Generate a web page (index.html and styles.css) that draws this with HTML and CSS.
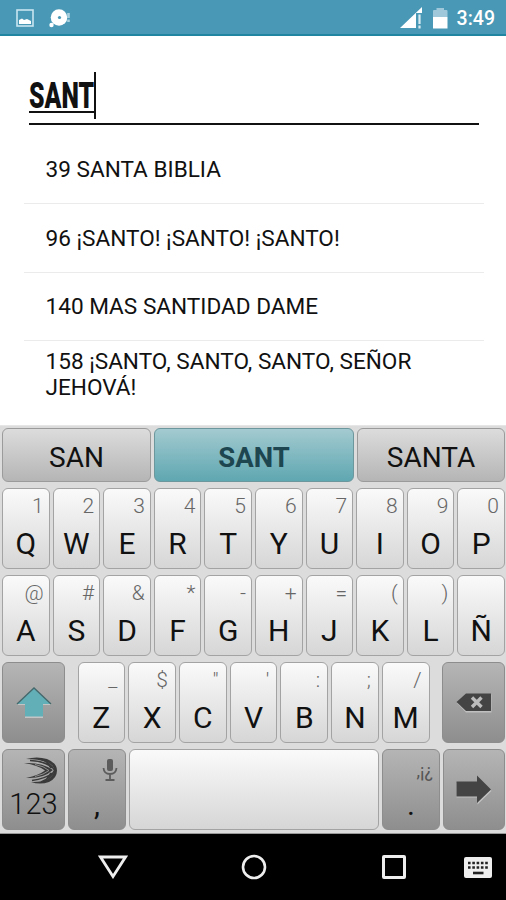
FILE: index.html
```
<!DOCTYPE html>
<html lang="es">
<head>
    <meta charset="UTF-8">
    <meta name="viewport" content="width=device-width, initial-scale=1.0">
    <title>Himnario</title>
    <link rel="stylesheet" href="styles.css">
</head>
<body>
    <div class="status-bar">
        <svg class="icon-picture" width="18" height="18" viewBox="0 0 18 18">
            <rect x="1" y="1" width="16" height="16" fill="none" stroke="#c9e5f0" stroke-width="1.6"/>
            <path d="M3 15V11L6 9.500L8 11L11 10L15 12V15Z" fill="#fff"/>
        </svg>
        <svg class="icon-disc" width="22" height="20" viewBox="0 0 22 20">
            <circle cx="10" cy="8.500" r="8.300" fill="#fff"/>
            <circle cx="2.500" cy="16" r="2.200" fill="#fff"/>
            <circle cx="10.500" cy="8.500" r="1.600" fill="#4998b6"/>
            <path d="M19.500 4V9M19.500 10.500V13" stroke="#a8d0de" stroke-width="2.600"/>
        </svg>
        <span class="spacer"></span>
        <svg class="icon-signal" width="22" height="22" viewBox="0 0 22 22">
            <path d="M0 21L22 0V6H16V21Z" fill="#fff"/>
            <path d="M19.500 7.500V17M19.500 18.500V21.500" stroke="#d8ebf2" stroke-width="2.200"/>
        </svg>
        <svg class="icon-battery" width="15" height="21" viewBox="0 0 15 21">
            <path d="M0 9V3Q0 2 1 2H3.500V0H11V2H13.500Q14.500 2 14.500 3V9Z" fill="#9fc9da"/>
            <path d="M0 9H14.500V20.500H0Z" fill="#fff"/>
        </svg>
        <span class="clock">3:49</span>
    </div>

    <div class="content">
        <div class="search-box">
            <div class="search-text"><span>SANT</span></div>
            <div class="cursor"></div>
        </div>
        <ul class="result-list">
            <li>39 SANTA BIBLIA</li>
            <li>96 ¡SANTO! ¡SANTO! ¡SANTO!</li>
            <li>140 MAS SANTIDAD DAME</li>
            <li class="two-lines">158 ¡SANTO, SANTO, SANTO, SEÑOR JEHOVÁ!</li>
        </ul>
    </div>

    <div class="keyboard">
        <div class="suggestions">
            <div class="suggestion">SAN</div>
            <div class="suggestion active">SANT</div>
            <div class="suggestion">SANTA</div>
        </div>
        <div class="key-row">
            <div class="key"><small>1</small><b>Q</b></div>
            <div class="key"><small>2</small><b>W</b></div>
            <div class="key"><small>3</small><b>E</b></div>
            <div class="key"><small>4</small><b>R</b></div>
            <div class="key"><small>5</small><b>T</b></div>
            <div class="key"><small>6</small><b>Y</b></div>
            <div class="key"><small>7</small><b>U</b></div>
            <div class="key"><small>8</small><b>I</b></div>
            <div class="key"><small>9</small><b>O</b></div>
            <div class="key"><small>0</small><b>P</b></div>
        </div>
        <div class="key-row">
            <div class="key"><small>@</small><b>A</b></div>
            <div class="key"><small>#</small><b>S</b></div>
            <div class="key"><small>&amp;</small><b>D</b></div>
            <div class="key"><small>*</small><b>F</b></div>
            <div class="key"><small>-</small><b>G</b></div>
            <div class="key"><small>+</small><b>H</b></div>
            <div class="key"><small>=</small><b>J</b></div>
            <div class="key"><small>(</small><b>K</b></div>
            <div class="key"><small>)</small><b>L</b></div>
            <div class="key"><small></small><b>Ñ</b></div>
        </div>
        <div class="key-row letters-row">
            <div class="key dark icon-key">
                <svg width="36" height="32" viewBox="0 0 36 32">
                    <path d="M1 18L18 2L35 18H27V31H9V18Z" fill="#c4c4c4"/>
                    <path d="M1 17L18 1L35 17H27V29.500H9V17Z" fill="#62afb7"/>
                    <path d="M1 17L18 1L35 17" fill="none" stroke="#45686c" stroke-width="1.300"/>
                </svg>
            </div>
            <div class="letters">
                <div class="key"><small>_</small><b>Z</b></div>
                <div class="key"><small>$</small><b>X</b></div>
                <div class="key"><small>"</small><b>C</b></div>
                <div class="key"><small>'</small><b>V</b></div>
                <div class="key"><small>:</small><b>B</b></div>
                <div class="key"><small>;</small><b>N</b></div>
                <div class="key"><small>/</small><b>M</b></div>
            </div>
            <div class="key dark icon-key">
                <svg width="36" height="20" viewBox="0 0 36 20">
                    <path d="M1 10L10 1.500H35.500V19.500H10Z" fill="#c0c0c0"/>
                    <path d="M0.500 9L10 0.500H35V18H10Z" fill="#444"/>
                    <path d="M16 4.500L25.500 14M25.500 4.500L16 14" stroke="#bdbdbd" stroke-width="3.400"/>
                </svg>
            </div>
        </div>
        <div class="key-row bottom-row">
            <div class="key dark numbers">
                <svg width="34" height="27" viewBox="0 0 34 27" fill="#3a3a3a">
                    <path d="M2 2Q13 -1 23 2Q33 6 33 13.500Q33 21 25 25Q16 28 7 25Q18 25.500 24 22Q30 18.500 30 13Q30 8 23 5Q14 2 2 2Z"/>
                    <path d="M0 6Q18 5 29 13Q19 22 2 21Q15 18 21 13.500Q14 8 0 6Z"/>
                    <path d="M6 3.500Q21 4 28.500 11M16 2Q26 5 31 14M8 23.500Q21 22 28.500 16M17 25Q26 22 31 13M22 4L27 11M22 23L27 16" fill="none" stroke="#3a3a3a" stroke-width="1.600"/>
                    <path d="M11 7.500Q20 9 25 13.500Q20 17.500 11 19.500" fill="none" stroke="#999" stroke-width="0.900"/>
                </svg>
                <b>123</b>
            </div>
            <div class="key dark comma">
                <svg width="16" height="24" viewBox="0 0 16 24" fill="none" stroke="#5c5c5c">
                    <rect x="5" y="1" width="6" height="12" rx="2" fill="#5c5c5c" stroke="none"/>
                    <path d="M1.500 10Q2 16 8 16Q14 16 14.500 10M8 16V21.500M3.500 22H12.500" stroke-width="1.800"/>
                </svg>
                <b>,</b>
            </div>
            <div class="key space"></div>
            <div class="key dark period"><small>,¡¿</small><b>.</b></div>
            <div class="key dark icon-key">
                <svg width="36" height="30" viewBox="0 0 36 30">
                    <path d="M0.500 8H21.500V2L35.500 16L21.500 29.500V22.500H0.500Z" fill="#c2c2c2"/>
                    <path d="M0.500 6.500H21V0.500L35 14.500L21 28V21.500H0.500Z" fill="#444"/>
                </svg>
            </div>
        </div>
    </div>

    <div class="nav-bar">
        <svg class="nav-back" width="30" height="24" viewBox="0 0 30 24">
            <path d="M2.500 2H27.500L15 21.500Z" fill="none" stroke="#eee" stroke-width="2.800"/>
        </svg>
        <svg class="nav-home" width="26" height="26" viewBox="0 0 26 26">
            <circle cx="13" cy="13" r="11" fill="none" stroke="#eee" stroke-width="2.600"/>
        </svg>
        <svg class="nav-recent" width="24" height="24" viewBox="0 0 24 24">
            <rect x="1.500" y="1.500" width="21" height="21" rx="0.500" fill="none" stroke="#eee" stroke-width="3"/>
        </svg>
        <svg class="nav-keyboard" width="28" height="21" viewBox="0 0 28 21">
            <rect width="28" height="21" rx="2" fill="#eee"/>
            <path d="M4 6H24M4 10.500H24" stroke="#222" stroke-width="2.600" stroke-dasharray="2.600 1.700"/>
            <path d="M9 16H19.500" stroke="#222" stroke-width="2.600"/>
        </svg>
    </div>
</body>
</html>
```
FILE: styles.css
```
* {
    box-sizing: border-box;
}

body {
    font-family: Roboto, "Liberation Sans", sans-serif;
    background-color: #fff;
    color: #111;
    margin: 0;
    height: 900px;
    display: flex;
    flex-direction: column;
    overflow: hidden;
}

svg {
    display: block;
    flex: none;
}

/* Status bar */
.status-bar {
    height: 36px;
    flex: none;
    display: flex;
    align-items: flex-start;
    padding: 0 11px 0 16px;
    background-color: #4998b6;
    border-bottom: 2px solid #1f85a0;
}

.icon-picture {
    margin-top: 9px;
}

.icon-disc {
    margin: 9px 0 0 15px;
}

.spacer {
    flex: 1;
}

.icon-signal {
    margin: 7px 11px 0 0;
}

.icon-battery {
    margin: 8px 9px 0 0;
}

.clock {
    color: #fff;
    font-size: 19.5px;
    font-weight: 500;
    line-height: 24px;
    margin-top: 7px;
}

/* Search and results */
.content {
    height: 389px;
    flex: none;
    padding: 36px 22px 0 24px;
}

.search-box {
    display: flex;
    height: 53px;
    margin: 0 5px;
    border-bottom: 2px solid #111;
}

.search-text {
    width: 65px;
    height: 41px;
    border-bottom: 2px solid #111;
}

.search-text span {
    display: block;
    width: 100px;
    font-size: 37px;
    font-weight: 900;
    line-height: 47px;
    transform: scaleX(0.67);
    transform-origin: left;
}

.cursor {
    width: 2px;
    height: 47px;
    background-color: #111;
}

.result-list {
    list-style: none;
    margin: 11px 0 0;
    padding: 0;
}

.result-list li {
    height: 68.3px;
    display: flex;
    align-items: center;
    padding: 2px 22px 0 21.5px;
    font-size: 22.6px;
    line-height: 26.5px;
    border-bottom: 1px solid #ebebeb;
}

.result-list .two-lines {
    padding-top: 0;
    border-bottom: none;
}

/* Keyboard */
.keyboard {
    height: 409px;
    flex: none;
    padding: 2px 1px 0 2px;
    background-color: #dcdcdc;
    border-top: 1px solid #e6e6e6;
    border-bottom: 1px solid #999;
}

.suggestions {
    display: grid;
    grid-template-columns: 149px 200px 148px;
    gap: 3px;
    height: 54px;
    margin-bottom: 6px;
}

.suggestion {
    height: 54px;
    border: 1px solid #9b9b9b;
    border-radius: 6px;
    background: linear-gradient(#dcdcdc, #b5b5b5);
    font-size: 28px;
    line-height: 58px;
    text-align: center;
}

.suggestion.active {
    background: linear-gradient(#a3cad0, #5fa7b1);
    border-color: #6b979d;
    color: #1d4650;
    font-weight: 700;
    font-size: 27.5px;
}

.key-row {
    display: flex;
    gap: 3px;
    height: 81px;
    margin-bottom: 6px;
}

.key {
    flex: 1;
    display: flex;
    flex-direction: column;
    padding-top: 5px;
    border: 1px solid #a3a3a3;
    border-radius: 6px;
    background: linear-gradient(#fafafa, #d6d6d6);
}

.key small {
    height: 32px;
    padding-right: 5px;
    font-size: 21px;
    font-weight: 300;
    line-height: 24px;
    text-align: right;
    color: #666;
}

.key b {
    font-size: 30px;
    font-weight: 400;
    line-height: 36px;
    text-align: center;
}

.key.dark {
    background: linear-gradient(#b5b5b5, #8e8e8e);
    border-color: #8d8d8d;
}

.icon-key {
    align-items: center;
    justify-content: center;
    padding: 0;
}

.letters-row {
    justify-content: space-between;
}

.letters-row .icon-key {
    flex: 0 0 63px;
}

.letters {
    display: flex;
    gap: 3px;
    width: 352px;
}

.letters small {
    padding-right: 7px;
}

.bottom-row {
    display: grid;
    grid-template-columns: 63px 58px 250px 58px 62px;
}

.numbers svg {
    margin: 2px 0 0 21px;
}

.numbers b {
    font-size: 29px;
    font-weight: 300;
    line-height: 34px;
    margin-top: 3px;
    color: #111;
}

.comma svg {
    margin: 3px 0 5px 33px;
}

.period small {
    padding: 4px 6px 0 0;
    font-size: 18px;
    font-weight: 400;
    color: #555;
}

/* Navigation bar */
.nav-bar {
    flex: 1;
    display: flex;
    align-items: center;
    padding: 0 14px 0 98px;
    background-color: #000;
}

.nav-home {
    margin-left: 113px;
}

.nav-recent {
    margin-left: 115px;
}

.nav-keyboard {
    margin-left: auto;
}
```
